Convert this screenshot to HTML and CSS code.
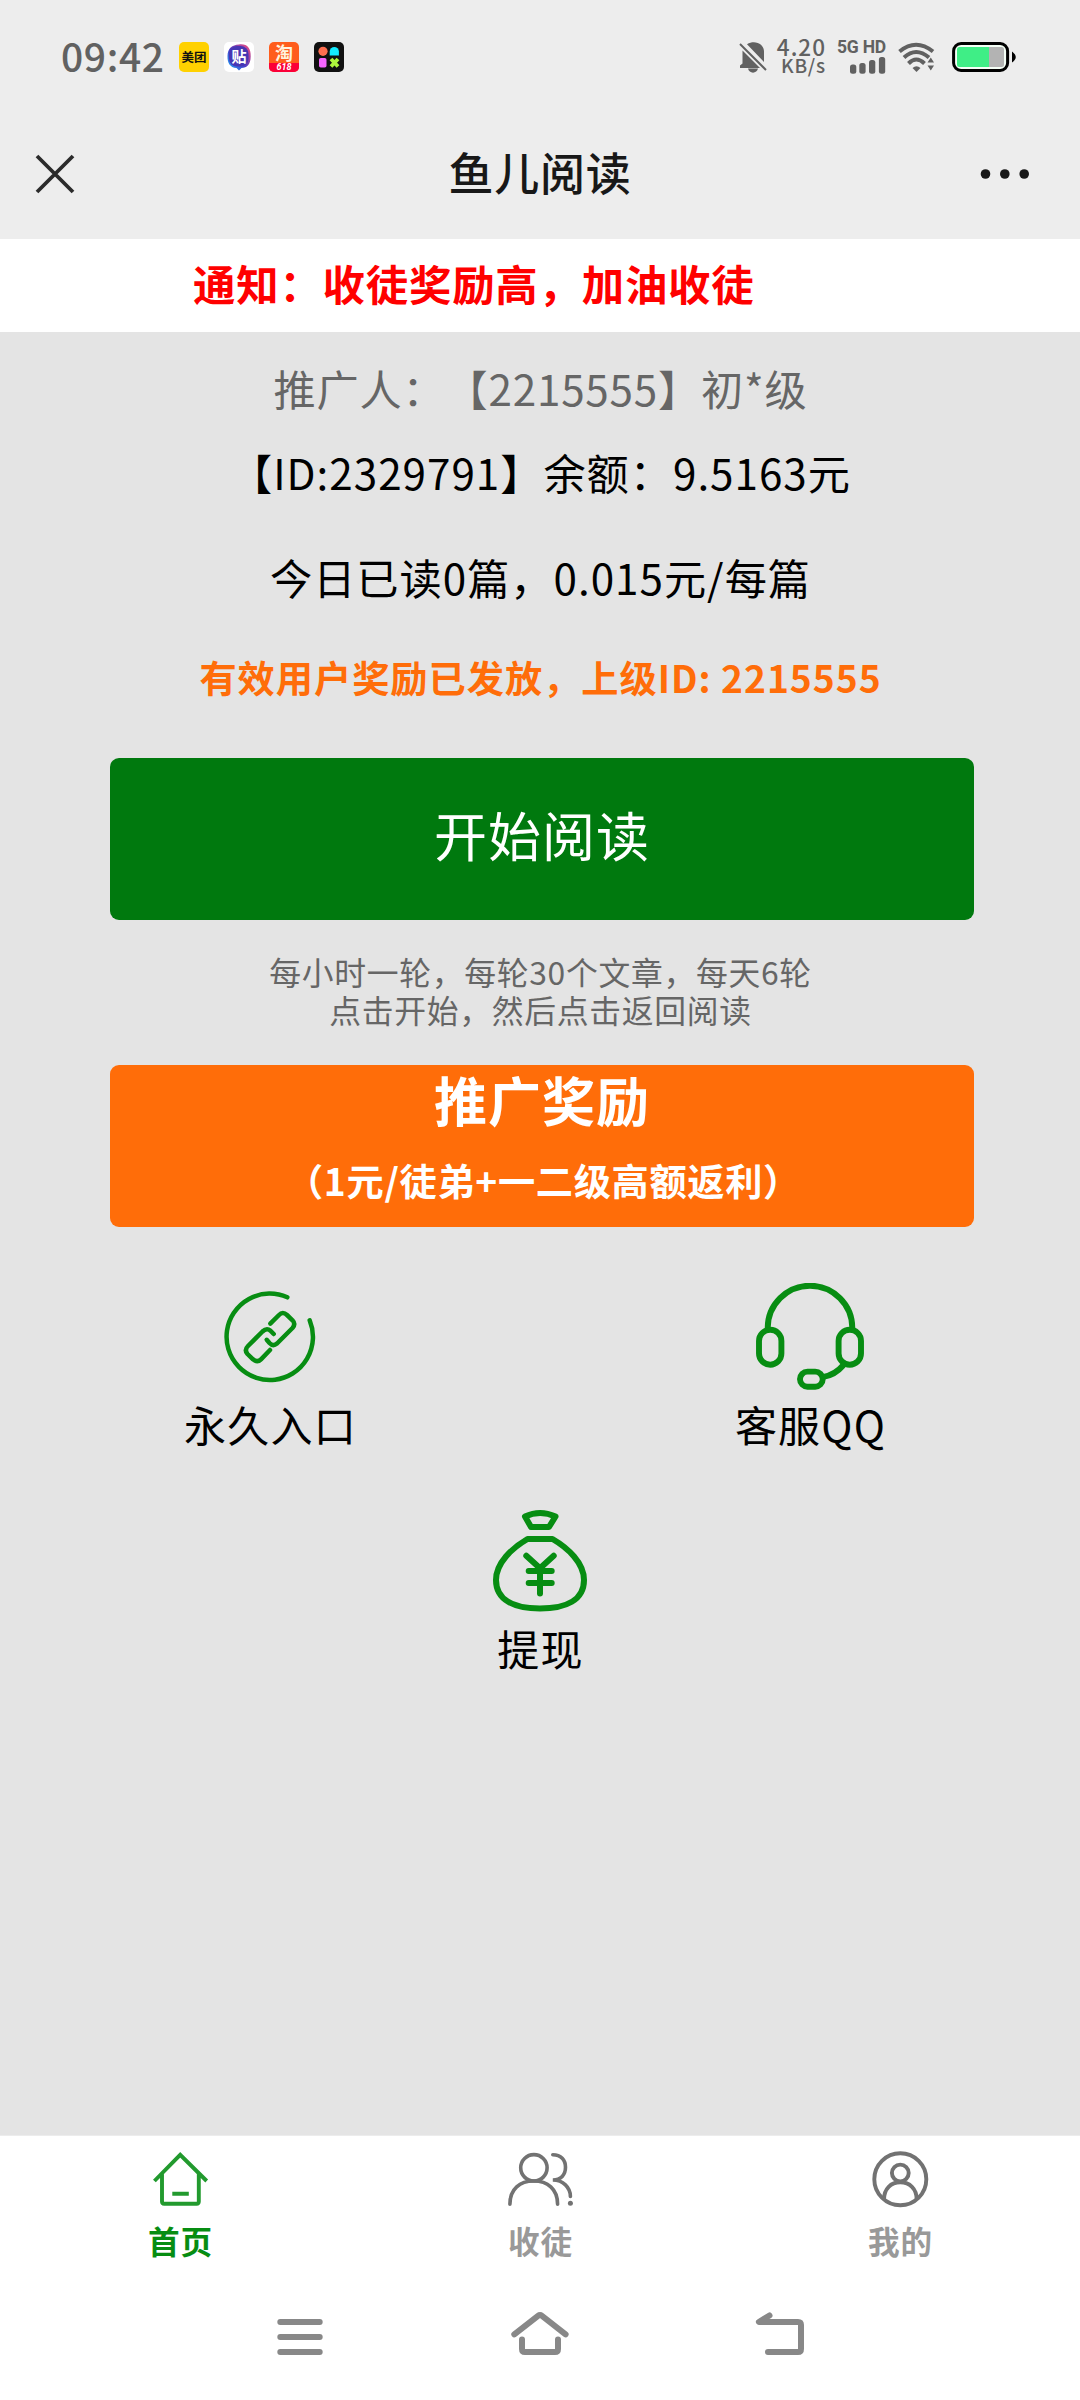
FILE: index.html
```html
<!DOCTYPE html>
<html lang="zh-CN">
<head>
<meta charset="utf-8">
<title>鱼儿阅读</title>
<link rel="stylesheet" href="styles.css">
</head>
<body>
<div class="status">
  <div class="status-left">
    <span class="time">09:42</span>
    <span class="app app-meituan">美团</span>
    <span class="app app-tieba">
      <svg viewBox="0 0 30 30"><defs><linearGradient id="tb" x1="0" y1="1" x2="1" y2="0"><stop offset="0" stop-color="#18b4ff"/><stop offset=".45" stop-color="#4a3cc8"/><stop offset="1" stop-color="#ff4f78"/></linearGradient></defs><path d="M15 2.500C23 1.500 27 6 26.700 14.500C26.500 23 23 25.500 17.500 26L15 28.500L12.500 26C6 25.500 3.300 21 3.500 14C3.700 6 8 3 15 2.500Z" fill="url(#tb)"/><rect x="5" y="4" width="19.500" height="20.500" rx="8" fill="#4736b4"/></svg>
      <span class="app-text">贴</span>
    </span>
    <span class="app app-taobao"><span class="tao">淘</span><span class="sale">618</span></span>
    <span class="app app-shapes">
      <svg viewBox="0 0 30 30"><circle cx="9" cy="9.300" r="4.600" fill="#ff6e50"/><path d="M15.700 13.600V9.500a4.600 4.600 0 0 1 9.200 0v4.100z" fill="#12eaff"/><rect x="5" y="16" width="7.500" height="9.500" rx="1.800" fill="#f765ff"/><path d="M17 17l7 7.500M24 17l-7 7.500" stroke="#aef63d" stroke-width="3.800"/></svg>
    </span>
  </div>
  <div class="status-right">
    <svg class="bell" viewBox="0 0 28 32" fill="#616161"><path d="M3.500 9.500L21 27H1v-2.500l2.500-2zM8 3.200C16 -1.500 25 3 25 10.500V21zM9 27.500h10c-1 5.500-9 5.500-10 0z"/><path d="M1 3l26 26" stroke="#616161" stroke-width="2"/></svg>
    <div class="speed"><span>4.20</span><small>KB/s</small></div>
    <div class="cell"><span>5G HD</span>
      <svg viewBox="0 0 36 17" fill="#616161"><rect x="0" y="7.500" width="6.300" height="9.200" rx="2.500"/><rect x="9.300" y="6" width="6.300" height="10.700" rx="2.500"/><rect x="19" y="3" width="6.300" height="13.700" rx="2.500"/><rect x="28.900" y="0" width="6.300" height="16.700" rx="2.500"/></svg>
    </div>
    <svg class="wifi" viewBox="0 0 38 30"><g fill="none" stroke="#616161" stroke-width="4"><path d="M1.500 9.500Q18 -4 35 9.500"/><path d="M6 15.500Q18 4.500 31 15.500"/><path d="M10.500 21.500Q18.200 13.500 26.500 21.500"/></g><path d="M14.500 26q4-3.500 8 0l-4 4zM29.500 20.500h6.500l-3.200-5zM29.500 23.500h6.500l-3.200 5z" fill="#616161"/></svg>
    <svg class="battery" viewBox="0 0 65 30"><rect x="1.600" y="1.500" width="54" height="27" rx="7.500" fill="#f4fff6" stroke="#000" stroke-width="3"/><path d="M7.500 5H37v20H7.500a2.500 2.500 0 0 1-2.500-2.500v-15A2.500 2.500 0 0 1 7.500 5z" fill="#3fee86"/><path d="M37 5h12.500A2.500 2.500 0 0 1 52 7.500v15a2.500 2.500 0 0 1-2.500 2.500H37z" fill="#b3b3b3"/><path d="M60 9.500q7.500 5.500 0 11z"/></svg>
  </div>
</div>
<header class="header">
  <svg class="close" viewBox="0 0 40 40"><path d="M2 2L38 38M38 2L2 38" stroke="#2b2b2b" stroke-width="3.800"/></svg>
  <h1>鱼儿阅读</h1>
  <svg class="more" viewBox="0 0 50 12" fill="#181818"><circle cx="5.500" cy="6" r="4.800"/><circle cx="24.800" cy="6" r="4.800"/><circle cx="44.200" cy="6" r="4.800"/></svg>
</header>
<div class="notice"><span>通知：收徒奖励高，加油收徒</span></div>
<main class="content">
  <p class="line promoter">推广人：【2215555】初*级</p>
  <p class="line balance">【ID:2329791】余额：9.5163元</p>
  <p class="line today">今日已读0篇，0.015元/每篇</p>
  <p class="line reward">有效用户奖励已发放，上级ID: 2215555</p>
  <button class="btn start">开始阅读</button>
  <p class="hint">每小时一轮，每轮30个文章，每天6轮<br>点击开始，然后点击返回阅读</p>
  <button class="btn promote"><span class="promote-title">推广奖励</span><span class="promote-sub">（1元/徒弟+一二级高额返利）</span></button>
  <div class="grid">
    <a class="entry">
      <svg class="stroke" viewBox="0 0 108 108" stroke-width="4.500"><path d="M71.300 14.300A43.200 43.200 0 1 0 93.700 37.300"/><path d="M54.300 40.700L63 32Q66.700 28 71 32L76.500 37.300Q80 41 76.500 45L61 60.500Q57 63.800 53.500 60L50.700 56.800"/><path d="M57.700 51L54.500 47.700Q50.700 44.500 46.500 48.500L32 63Q28 67 31.500 71L37 76.300Q41.300 80 45 76.300L54 67"/></svg>
      <span>永久入口</span>
    </a>
    <a class="entry">
      <svg class="stroke" viewBox="0 0 108 108" stroke-width="5.900"><path d="M11.700 46V45A42.300 42.300 0 0 1 96.300 45V46"/><rect x="3" y="46.700" width="22.400" height="35" rx="11.200"/><rect x="82.600" y="46.700" width="22.400" height="35" rx="11.200"/><rect x="44" y="88.600" width="22.700" height="15.100" rx="7.500"/><path d="M67.500 93.800Q79 92 87.500 82"/></svg>
      <span>客服QQ</span>
    </a>
    <a class="entry wide">
      <svg class="stroke" viewBox="0 0 108 108" stroke-width="6"><path d="M39 9.500Q54 2.500 69.500 9.500L63 20H45Z"/><path d="M41.500 32H66.500C82 41 98 56 98 73C98 93 80 101.500 54 101.500C28 101.500 10 93 10 73C10 56 26 41 41.500 32Z"/><path d="M40.300 48.700L54 61.300L67.700 48.700M54 61.300V86.500M42.700 64H65.700M42.700 76H65.700"/></svg>
      <span>提现</span>
    </a>
  </div>
</main>
<nav class="tabs">
  <a class="tab active">
    <svg viewBox="0 0 66 60" stroke="#229a2e" stroke-width="3.900"><path d="M7.400 31L33.200 4.800L59.700 31M15 24V51.500Q15 53.700 17.200 53.700H49.600Q51.800 53.700 51.800 51.500V24M25.300 43.700H41.800"/></svg>
    <span>首页</span>
  </a>
  <a class="tab">
    <svg viewBox="0 0 66 60" stroke="#727272" stroke-width="3.600" stroke-linecap="round"><circle cx="26.900" cy="17.800" r="13.200"/><path d="M2.900 54.300C2.900 39 13 31 26.700 31S50.600 39 50.600 54.300M45.800 4.700C54 4.700 58.500 10 58.500 17.300S54 30 45.800 30C56 30 63.400 37.500 63.400 46.500"/><circle cx="63.400" cy="53.300" r="2.500" fill="#727272" stroke="none"/></svg>
    <span>收徒</span>
  </a>
  <a class="tab">
    <svg viewBox="0 0 66 60" stroke="#727272" stroke-width="3.900"><circle cx="33.300" cy="29.300" r="26"/><circle cx="33.300" cy="23" r="8.400"/><path d="M17 49.500C17 38.500 24 32.300 33.300 32.300S49.700 38.500 49.700 49.500"/></svg>
    <span>我的</span>
  </a>
</nav>
<div class="sysnav">
  <svg viewBox="0 0 60 60"><path d="M10.300 15H49.700M10.300 30H49.700M10.300 45H49.700"/></svg>
  <svg viewBox="0 0 60 60"><path d="M4.300 27.300L28 8.800Q30 7.300 32 8.800L55.600 27.300M12 32.500V42Q12 45 15 45H45Q48 45 48 42V32.500"/></svg>
  <svg viewBox="0 0 60 60"><path d="M19.500 8.500L8.900 15H48Q51 15 51 18V42Q51 45 48 45H18"/></svg>
</div>
</body>
</html>
```
FILE: styles.css
```css
* { box-sizing: border-box; margin: 0; padding: 0; }
body {
  width: 1080px;
  height: 2400px;
  display: flex;
  flex-direction: column;
  background: #fff;
  color: #000;
  font-family: "Noto Sans CJK SC", "Noto Sans", sans-serif;
  text-spacing-trim: space-all;
  overflow: hidden;
}
svg { display: block; flex: none; }
p, span, h1 { white-space: nowrap; }

.status {
  height: 112px;
  display: flex;
  justify-content: space-between;
  padding: 0 63px 0 61px;
  background: #ededed;
  color: #616161;
}
.status-left { display: flex; align-items: center; gap: 15px; height: 114px; }
.time { font-size: 39px; font-weight: 500; line-height: 60px; width: 103px; letter-spacing: 0.6px; margin-top: -5px; }
.app {
  width: 30px;
  height: 30px;
  border-radius: 5px;
  overflow: hidden;
  display: grid;
  place-items: center;
  font-weight: 700;
  line-height: 1;
}
.app svg, .app-text { grid-area: 1 / 1; }
.app svg { width: 30px; height: 30px; }
.app-meituan { background: #ffd100; color: #111; font-size: 12.5px; }
.app-tieba { background: #fff; color: #fff; }
.app-text { font-size: 15px; line-height: 15px; margin-top: -3px; }
.app-taobao { background: #ff5d1c; color: #fff3df; grid-template-rows: 21px 9px; }
.tao { font-size: 18px; line-height: 21px; }
.sale { background: #fb0038; width: 30px; text-align: center; font: italic 700 9px/9px Roboto, sans-serif; color: #fff; }
.app-shapes { background: #111; }

.status-right { display: flex; align-items: center; height: 114px; }
.bell { width: 28px; height: 32px; margin-right: 11px; }
.speed { width: 48px; display: flex; flex-direction: column; align-items: flex-end; margin: -4px 12px 0 0; }
.speed span { font-size: 22.5px; line-height: 20px; font-weight: 500; letter-spacing: 1px; }
.speed small { font-size: 19px; line-height: 18px; font-weight: 500; letter-spacing: 0.8px; }
.cell { width: 48px; display: flex; flex-direction: column; align-items: flex-end; margin-right: 12px; gap: 2px; }
.cell span { font: 700 17.5px/15px Roboto, sans-serif; letter-spacing: -0.2px; }
.cell svg { width: 36px; height: 17px; }
.wifi { width: 38px; height: 30px; margin-right: 16px; }
.battery { width: 65px; height: 30px; }

.header {
  height: 127px;
  display: grid;
  grid-template-columns: 50px 1fr 50px;
  align-items: center;
  padding: 0 50px 4px 35px;
  background: #ededed;
  color: #181818;
}
.close { width: 40px; height: 40px; }
.header h1 { font-size: 45px; font-weight: 500; line-height: 60px; letter-spacing: 0.8px; padding-left: 15px; margin-top: -4px; text-align: center; }
.more { width: 50px; height: 12px; }

.notice { height: 93px; padding-left: 193px; background: #fff; }
.notice span { font-size: 42.4px; font-weight: 700; letter-spacing: 0.8px; line-height: 87px; color: #f00; }

.content { height: 1804px; padding-top: 14px; background: #e4e4e4; border-bottom: 1px solid #ececec; }
.line { text-align: center; font-size: 42.2px; letter-spacing: 1px; padding-left: 1px; }
.promoter { line-height: 84px; color: #666; letter-spacing: 0.8px; }
.balance { line-height: 83px; }
.today { line-height: 127px; }
.reward { line-height: 75px; font-size: 37.2px; font-weight: 700; color: #ff6d09; }

.btn {
  display: flex;
  flex-direction: column;
  align-items: center;
  width: 864px;
  height: 162px;
  margin-left: 110px;
  border: 0;
  border-radius: 9px;
  color: #fff;
  font-family: inherit;
}
.start { margin-top: 43px; background: #00790e; font-size: 53px; letter-spacing: 1px; line-height: 153px; justify-content: flex-start; }
.hint { height: 145px; padding: 32px 0 0 1px; text-align: center; font-size: 31.8px; letter-spacing: 0.7px; line-height: 38.4px; color: #666; }
.promote { background: #ff6d09; font-weight: 700; }
.promote-title { font-size: 53px; letter-spacing: 1px; line-height: 68px; }
.promote-sub { font-size: 37.2px; letter-spacing: 0.7px; line-height: 94px; padding-left: 3px; }

.grid { display: grid; grid-template-columns: 1fr 1fr; row-gap: 50px; padding-top: 56px; }
.entry { display: flex; flex-direction: column; align-items: center; }
.entry.wide { grid-column: 1 / -1; }
.entry svg { width: 108px; height: 108px; }
.stroke { fill: none; stroke: #078d12; stroke-linecap: round; stroke-linejoin: round; }
.entry span { font-size: 42px; letter-spacing: 1.2px; line-height: 66px; padding-left: 1px; }

.tabs { height: 134px; display: grid; grid-template-columns: repeat(3, 1fr); padding-top: 14px; background: #fff; }
.tab { display: flex; flex-direction: column; align-items: center; color: #999; }
.tab svg { width: 66px; height: 60px; fill: none; }
.tab span { font-size: 31.6px; letter-spacing: 0.8px; line-height: 61px; font-weight: 700; padding-left: 1px; }
.tab.active { color: #078d12; }

.sysnav { height: 130px; display: grid; grid-template-columns: repeat(3, 240px); justify-content: center; justify-items: center; padding-top: 37px; }
.sysnav svg { width: 60px; height: 60px; fill: none; stroke: #888; stroke-width: 6; stroke-linecap: round; stroke-linejoin: round; }
```
